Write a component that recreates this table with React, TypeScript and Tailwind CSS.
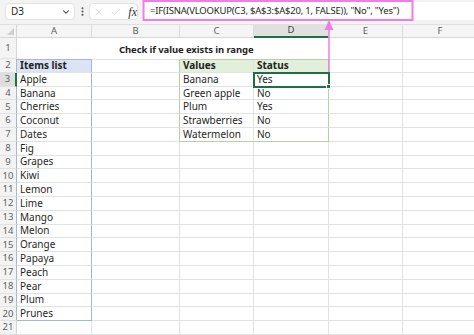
import { ChevronDown, EllipsisVertical, X, Check } from "lucide-react";

const cols = ["A", "B", "C", "D", "E", "F"];

const items = [
  "Apple", "Banana", "Cherries", "Coconut", "Dates", "Fig", "Grapes", "Kiwi", "Lemon",
  "Lime", "Mango", "Melon", "Orange", "Papaya", "Peach", "Pear", "Plum", "Prunes",
];

const lookup = [
  ["Banana", "Yes"],
  ["Green apple", "No"],
  ["Plum", "Yes"],
  ["Strawberries", "No"],
  ["Watermelon", "No"],
];

function textFor(r: number, c: string) {
  if (c === "A") {
    if (r === 2) return "Items list";
    if (r >= 3 && r <= 20) return items[r - 3];
  }
  if (c === "C" || c === "D") {
    if (r === 2) return c === "C" ? "Values" : "Status";
    if (r >= 3 && r <= 7) return lookup[r - 3][c === "C" ? 0 : 1];
  }
  return "";
}

function rightColor(r: number, c: string) {
  if (c === "A" && r >= 2 && r <= 20) return "border-r-[#a3b7da]";
  if ((c === "B" || c === "D") && r >= 2 && r <= 7) return "border-r-[#b4d3a0]";
  return "border-r-[#e2e2e2]";
}

function bottomColor(r: number, c: string) {
  if (c === "A" && r === 20) return "border-b-[#a3b7da]";
  if ((c === "C" || c === "D") && r === 7) return "border-b-[#b4d3a0]";
  return "border-b-[#e2e2e2]";
}

function topColor(c: string) {
  if (c === "A") return "border-t border-t-[#a3b7da]";
  if (c === "C" || c === "D") return "border-t border-t-[#b4d3a0]";
  return "border-t border-t-[#e2e2e2]";
}

function fill(r: number, c: string) {
  if (r !== 2) return "";
  if (c === "A") return "bg-[#dbe4f4] font-bold";
  if (c === "C" || c === "D") return "bg-[#e2efda] font-bold";
  return "";
}

function Cell({ r, c }: { r: number; c: string }) {
  const selected = r === 3 && c === "D";
  return (
    <div
      className={[
        "flex items-center pl-[3px] text-[10px] text-[#1f1f1f] whitespace-nowrap border-r border-b",
        rightColor(r, c),
        bottomColor(r, c),
        r === 2 ? topColor(c) : "",
        fill(r, c),
        selected ? "relative z-10 outline-2 outline-[#1e7044] -outline-offset-1" : "",
      ].join(" ")}
    >
      {textFor(r, c)}
      {selected && (
        <span className="absolute -right-[3px] -bottom-[3px] w-[5px] h-[5px] bg-[#1e7044] border border-white" />
      )}
    </div>
  );
}

function RowHead({ r }: { r: number }) {
  const cls =
    r === 3
      ? "bg-[#dedede] border-r-2 border-r-[#1e7044]"
      : r >= 2 && r <= 20
      ? "bg-[#f3f3f3] border-r border-r-[#a3b7da]"
      : "bg-[#f3f3f3] border-r border-r-[#d6d6d6]";
  return (
    <div className={`flex items-center justify-center text-[9.5px] text-[#616161] border-b border-b-[#e2e2e2] ${cls}`}>
      {r}
    </div>
  );
}

function FormulaBar() {
  return (
    <div className="flex items-start h-[25px] bg-[#f3f3f3] pl-[5px] pt-[3px] border-b border-[#e0e0e0]">
      <div className="flex items-center justify-between w-[70px] h-[17px] bg-white rounded-[4px] border border-[#e2e2e2] pl-[5px] pr-[3px] text-[10px] text-[#1f1f1f]">
        D3
        <ChevronDown size={10} strokeWidth={2.5} className="text-[#333]" />
      </div>
      <div className="flex items-center h-[17px] w-[14px] justify-center text-[#555]">
        <EllipsisVertical size={11} strokeWidth={2.5} />
      </div>
      <div className="flex items-center h-[17px] w-[49px] bg-white rounded-[4px] border border-[#e2e2e2] pl-[3px] gap-[5px]">
        <X size={12} strokeWidth={1.4} className="text-[#c4c4c4]" />
        <Check size={12} strokeWidth={1.4} className="text-[#c4c4c4]" />
        <span className="font-['Liberation_Serif',serif] italic text-[12px] leading-none text-[#333] ml-[2px]">fx</span>
      </div>
      <div className="flex items-center flex-1 h-[18px] -mt-[1px] ml-[4px] bg-white pl-[8px] text-[9.5px] tracking-[-0.2px] text-[#1f1f1f] whitespace-nowrap">
        =IF(ISNA(VLOOKUP(C3, $A$3:$A$20, 1, FALSE)), "No", "Yes")
      </div>
    </div>
  );
}

function Sheet() {
  const rows = Array.from({ length: 21 }, (_, i) => i + 1);
  return (
    <div className="grid grid-cols-[17px_75px_88px_74px_75px_74px_75px] grid-rows-[13px_21px_repeat(20,13.8px)] w-[478px]">
      <div className="relative bg-[#f3f3f3] border-r border-b border-[#d6d6d6]">
        <svg className="absolute right-[2px] bottom-[2px]" width="7" height="7" viewBox="0 0 7 7">
          <polygon points="7,0 7,7 0,7" fill="#cfcfcf" />
        </svg>
      </div>
      {cols.map((c) => (
        <div
          key={c}
          className={
            c === "D"
              ? "flex items-center justify-center text-[9.5px] text-[#444] bg-[#e0e0e0] border-r border-r-[#d6d6d6] border-b-2 border-b-[#1e7044]"
              : "flex items-center justify-center text-[9.5px] text-[#616161] bg-[#f5f5f5] border-r border-r-[#dcdcdc] border-b border-b-[#d6d6d6]"
          }
        >
          {c}
        </div>
      ))}
      {rows.map((r) =>
        r === 1 ? (
          [
            <RowHead key="h1" r={1} />,
            <div key="t1" className="col-span-4 flex items-end pb-[2px] pl-[102px] text-[9.5px] tracking-[-0.1px] font-bold text-[#1f1f1f] whitespace-nowrap">
              Check if value exists in range
            </div>,
            <div key="e1" className="border-r border-[#e2e2e2]" />,
            <div key="f1" className="border-r border-[#e2e2e2]" />,
          ]
        ) : (
          [<RowHead key={`h${r}`} r={r} />, ...cols.map((c) => <Cell key={`${c}${r}`} r={r} c={c} />)]
        )
      )}
    </div>
  );
}

export default function App() {
  return (
    <div className="relative w-[474px] h-[335px] overflow-hidden bg-white font-['Noto_Sans',sans-serif]">
      <FormulaBar />
      <Sheet />
      <svg className="absolute inset-0 pointer-events-none" width="474" height="335" viewBox="0 0 474 335">
        <rect x="143.5" y="1" width="269" height="19" fill="none" stroke="#f07ce6" strokeWidth="2" />
        <line x1="329" y1="72" x2="329" y2="28" stroke="#f07ce6" strokeWidth="1.5" />
        <polygon points="329,20 324.5,30 333.5,30" fill="#f07ce6" />
      </svg>
    </div>
  );
}
